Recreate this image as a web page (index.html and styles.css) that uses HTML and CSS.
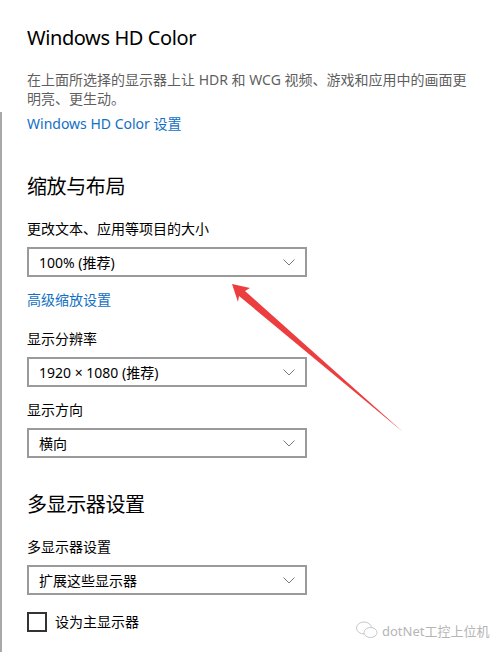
FILE: index.html
```html
<!DOCTYPE html>
<html lang="zh-CN">
<head>
  <meta charset="utf-8" />
  <meta name="viewport" content="width=device-width, initial-scale=1.0" />
  <title>显示设置</title>
  <link rel="stylesheet" href="styles.css">
</head>
<body>
  <div class="page">
    <section class="group">
      <h2 class="title">Windows HD Color</h2>
      <p class="desc">在上面所选择的显示器上让 HDR 和 WCG 视频、游戏和应用中的画面更明亮、更生动。</p>
      <a class="link" href="#">Windows HD Color 设置</a>
    </section>

    <section class="group">
      <h2 class="title heading">缩放与布局</h2>
      <div class="field first">
        <p class="label">更改文本、应用等项目的大小</p>
        <div class="select">
          <span>100% (推荐)</span>
          <svg class="chevron" width="12" height="7" viewBox="0 0 12 7"><path d="M0.5 0.5 L6 6 L11.5 0.5" /></svg>
        </div>
      </div>
      <a class="link after-select" href="#">高级缩放设置</a>
      <div class="field">
        <p class="label">显示分辨率</p>
        <div class="select">
          <span>1920 × 1080 (推荐)</span>
          <svg class="chevron" width="12" height="7" viewBox="0 0 12 7"><path d="M0.5 0.5 L6 6 L11.5 0.5" /></svg>
        </div>
      </div>
      <div class="field near">
        <p class="label">显示方向</p>
        <div class="select">
          <span>横向</span>
          <svg class="chevron" width="12" height="7" viewBox="0 0 12 7"><path d="M0.5 0.5 L6 6 L11.5 0.5" /></svg>
        </div>
      </div>
    </section>

    <section class="group">
      <h2 class="title heading multi">多显示器设置</h2>
      <div class="field first">
        <p class="label">多显示器设置</p>
        <div class="select">
          <span>扩展这些显示器</span>
          <svg class="chevron" width="12" height="7" viewBox="0 0 12 7"><path d="M0.5 0.5 L6 6 L11.5 0.5" /></svg>
        </div>
      </div>
      <label class="check">
        <span class="box"></span>
        <span>设为主显示器</span>
      </label>
    </section>

    <!-- red annotation arrow pointing at the first dropdown -->
    <svg class="arrow" width="496" height="652" viewBox="0 0 496 652">
      <polygon points="232,284 250,288 245,291 403,432 239,296 238,302" />
    </svg>

    <div class="watermark">
      <svg width="24" height="20" viewBox="0 0 24 20">
        <ellipse cx="9" cy="8" rx="7.5" ry="6" />
        <ellipse cx="15.5" cy="12.5" rx="6.5" ry="5" />
      </svg>
      <span>dotNet工控上位机</span>
    </div>
  </div>
</body>
</html>
```

FILE: styles.css
```css
* {
    padding: 0;
    margin: 0;
    box-sizing: border-box;
    font-family: "Noto Sans", "Noto Sans CJK SC", sans-serif;
}

body {
    background-color: #ffffff;
    color: #000000;
}

/* grey window edge on the left, drawn as a background strip */
.page {
    position: relative;
    width: 496px;
    height: 652px;
    overflow: hidden;
    padding: 24px 0 0 27px;
    background: linear-gradient(#a8a8a8, #a8a8a8) no-repeat 0 112px / 2px 540px;
}

.title {
    font-size: 20px;
    font-weight: 400;
    line-height: 28px;
    letter-spacing: -0.4px;
}

.heading {
    margin-top: 40px;
}

.heading.multi {
    margin-top: 33px;
}

.desc {
    width: 445px;
    margin-top: 18px;
    font-size: 14px;
    line-height: 19px;
    color: #5f5f5f;
}

.link {
    display: block;
    margin-top: 6px;
    font-size: 14px;
    line-height: 19px;
    color: #1170c4;
    text-decoration: none;
}

.link.after-select {
    margin-top: 13px;
}

.field {
    margin-top: 20px;
}

.field.first {
    margin-top: 18px;
}

.field.near {
    margin-top: 13px;
}

.label {
    font-size: 14px;
    line-height: 19px;
}

.select {
    display: flex;
    justify-content: space-between;
    align-items: center;
    width: 280px;
    height: 30px;
    margin-top: 9px;
    padding: 0 10px 0 10px;
    border: 2px solid #9a9a9a;
    font-size: 14px;
}

.chevron path {
    fill: none;
    stroke: #7a7a7a;
    stroke-width: 1;
}

.check {
    display: flex;
    align-items: center;
    gap: 8px;
    margin-top: 17px;
    font-size: 14px;
    line-height: 20px;
}

.box {
    width: 20px;
    height: 20px;
    border: 2px solid #333333;
}

.arrow {
    position: absolute;
    left: 0;
    top: 0;
}

.arrow polygon {
    fill: #ec3e3e;
}

.watermark {
    position: absolute;
    left: 355px;
    top: 620px;
    display: flex;
    align-items: center;
    gap: 3px;
    font-size: 13px;
    color: #b5b5b5;
}

.watermark ellipse {
    fill: #ffffff;
    stroke: #c8c8c8;
    stroke-width: 1;
}
```
